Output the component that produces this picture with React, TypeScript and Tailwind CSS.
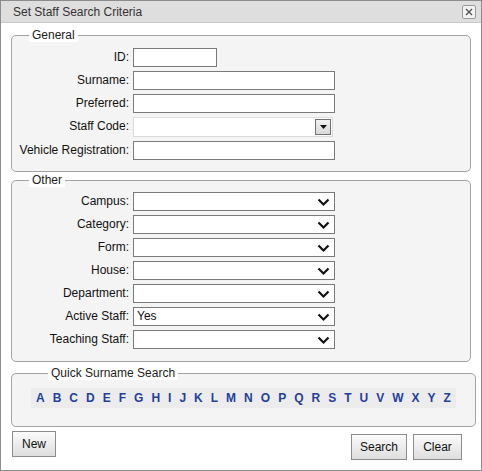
import React from "react";

const font = { fontFamily: '"Liberation Sans", Arial, sans-serif' };

function Chevron() {
  return (
    <svg width="13" height="9" viewBox="0 0 13 9" className="absolute right-[4px] top-[5px]">
      <path d="M1.5 1.5 L6.5 6.5 L11.5 1.5" fill="none" stroke="#111" strokeWidth="2.2" />
    </svg>
  );
}

function Select({ value = "" }: { value?: string }) {
  return (
    <div className="relative w-[202px] h-[19px] border border-[#7a7a7a] bg-white text-[12px] leading-[17px] pl-[3px] text-[#111]">
      {value}
      <Chevron />
    </div>
  );
}

function Input({ w = "w-[202px]" }: { w?: string }) {
  return <div className={`${w} h-[19px] border border-[#7a7a7a] bg-white`} />;
}

function Combo() {
  return (
    <div className="relative w-[200px] h-[20px] border border-[#dcdcdc] bg-white">
      <div className="absolute right-[1px] top-[1px] w-[16px] h-[16px] border border-[#6f6f6f] bg-gradient-to-b from-[#f2f2f2] to-[#d8d8d8] flex items-center justify-center">
        <svg width="7" height="4" viewBox="0 0 7 4">
          <path d="M0 0 L7 0 L3.5 4 Z" fill="#111" />
        </svg>
      </div>
    </div>
  );
}

function Row({ label, children }: { label: string; children: React.ReactNode }) {
  return (
    <>
      <div className="text-right text-[12px] leading-[19px] text-[#111]">{label}:</div>
      <div>{children}</div>
    </>
  );
}

function Group({ title, children, className = "" }: { title: string; children: React.ReactNode; className?: string }) {
  return (
    <fieldset className={`border border-[#a3a3a3] rounded-[5px] bg-[#f4f4f4] ${className}`}>
      <legend className="ml-[17px] px-[3px] bg-white text-[12px] leading-[14px] text-[#222]">{title}</legend>
      {children}
    </fieldset>
  );
}

function Button({ label, className = "" }: { label: string; className?: string }) {
  return (
    <button className={`h-[26px] border border-[#8c8c8c] bg-gradient-to-b from-[#fbfbfb] to-[#dedede] text-[12px] text-[#111] ${className}`}>
      {label}
    </button>
  );
}

const letters = "ABCDEFGHIJKLMNOPQRSTUVWXYZ".split("");

export default function App() {
  return (
    <div className="w-[482px] h-[471px] border border-[#8c8c8c] bg-white flex flex-col" style={font}>
      {/* Title bar */}
      <div className="h-[22px] shrink-0 bg-[#dedede] border-b border-[#c8c8c8] flex items-center justify-between pl-[12px] pr-[5px]">
        <span className="text-[12px] text-[#333]">Set Staff Search Criteria</span>
        <div className="w-[14px] h-[14px] rounded-[2px] border border-[#9a9a9a] bg-[#f2f2f2] flex items-center justify-center">
          <svg width="8" height="8" viewBox="0 0 8 8">
            <path d="M1 1 L7 7 M7 1 L1 7" stroke="#555" strokeWidth="1.4" />
          </svg>
        </div>
      </div>

      <div className="flex flex-col px-[10px] pt-[5px]">
        <Group title="General" className="pt-[6px] pb-[11px]">
          <div className="grid grid-cols-[117px_auto] gap-x-[4px] gap-y-[4px]">
            <Row label="ID"><Input w="w-[84px]" /></Row>
            <Row label="Surname"><Input /></Row>
            <Row label="Preferred"><Input /></Row>
            <Row label="Staff Code"><Combo /></Row>
            <Row label="Vehicle Registration"><Input /></Row>
          </div>
        </Group>

        <Group title="Other" className="mt-[1px] pt-[5px] pb-[12px]">
          <div className="grid grid-cols-[117px_auto] gap-x-[4px] gap-y-[4px]">
            <Row label="Campus"><Select /></Row>
            <Row label="Category"><Select /></Row>
            <Row label="Form"><Select /></Row>
            <Row label="House"><Select /></Row>
            <Row label="Department"><Select /></Row>
            <Row label="Active Staff"><Select value="Yes" /></Row>
            <Row label="Teaching Staff"><Select /></Row>
          </div>
        </Group>

        <Group title="Quick Surname Search" className="mt-[4px] pt-[8px] pb-[18px] px-[19px]">
          <div className="h-[20px] bg-[#ececec] flex items-center gap-[8px] px-[5px] w-fit">
            {letters.map((l) => (
              <span key={l} className="text-[12px] font-bold text-[#24409c] leading-none">
                {l}
              </span>
            ))}
          </div>
        </Group>

        <div className="flex items-start justify-between mt-[4px] px-[1px]">
          <Button label="New" className="w-[44px]" />
          <div className="flex gap-[6px] mt-[3px] mr-[8px]">
            <Button label="Search" className="w-[56px]" />
            <Button label="Clear" className="w-[49px]" />
          </div>
        </div>
      </div>
    </div>
  );
}
